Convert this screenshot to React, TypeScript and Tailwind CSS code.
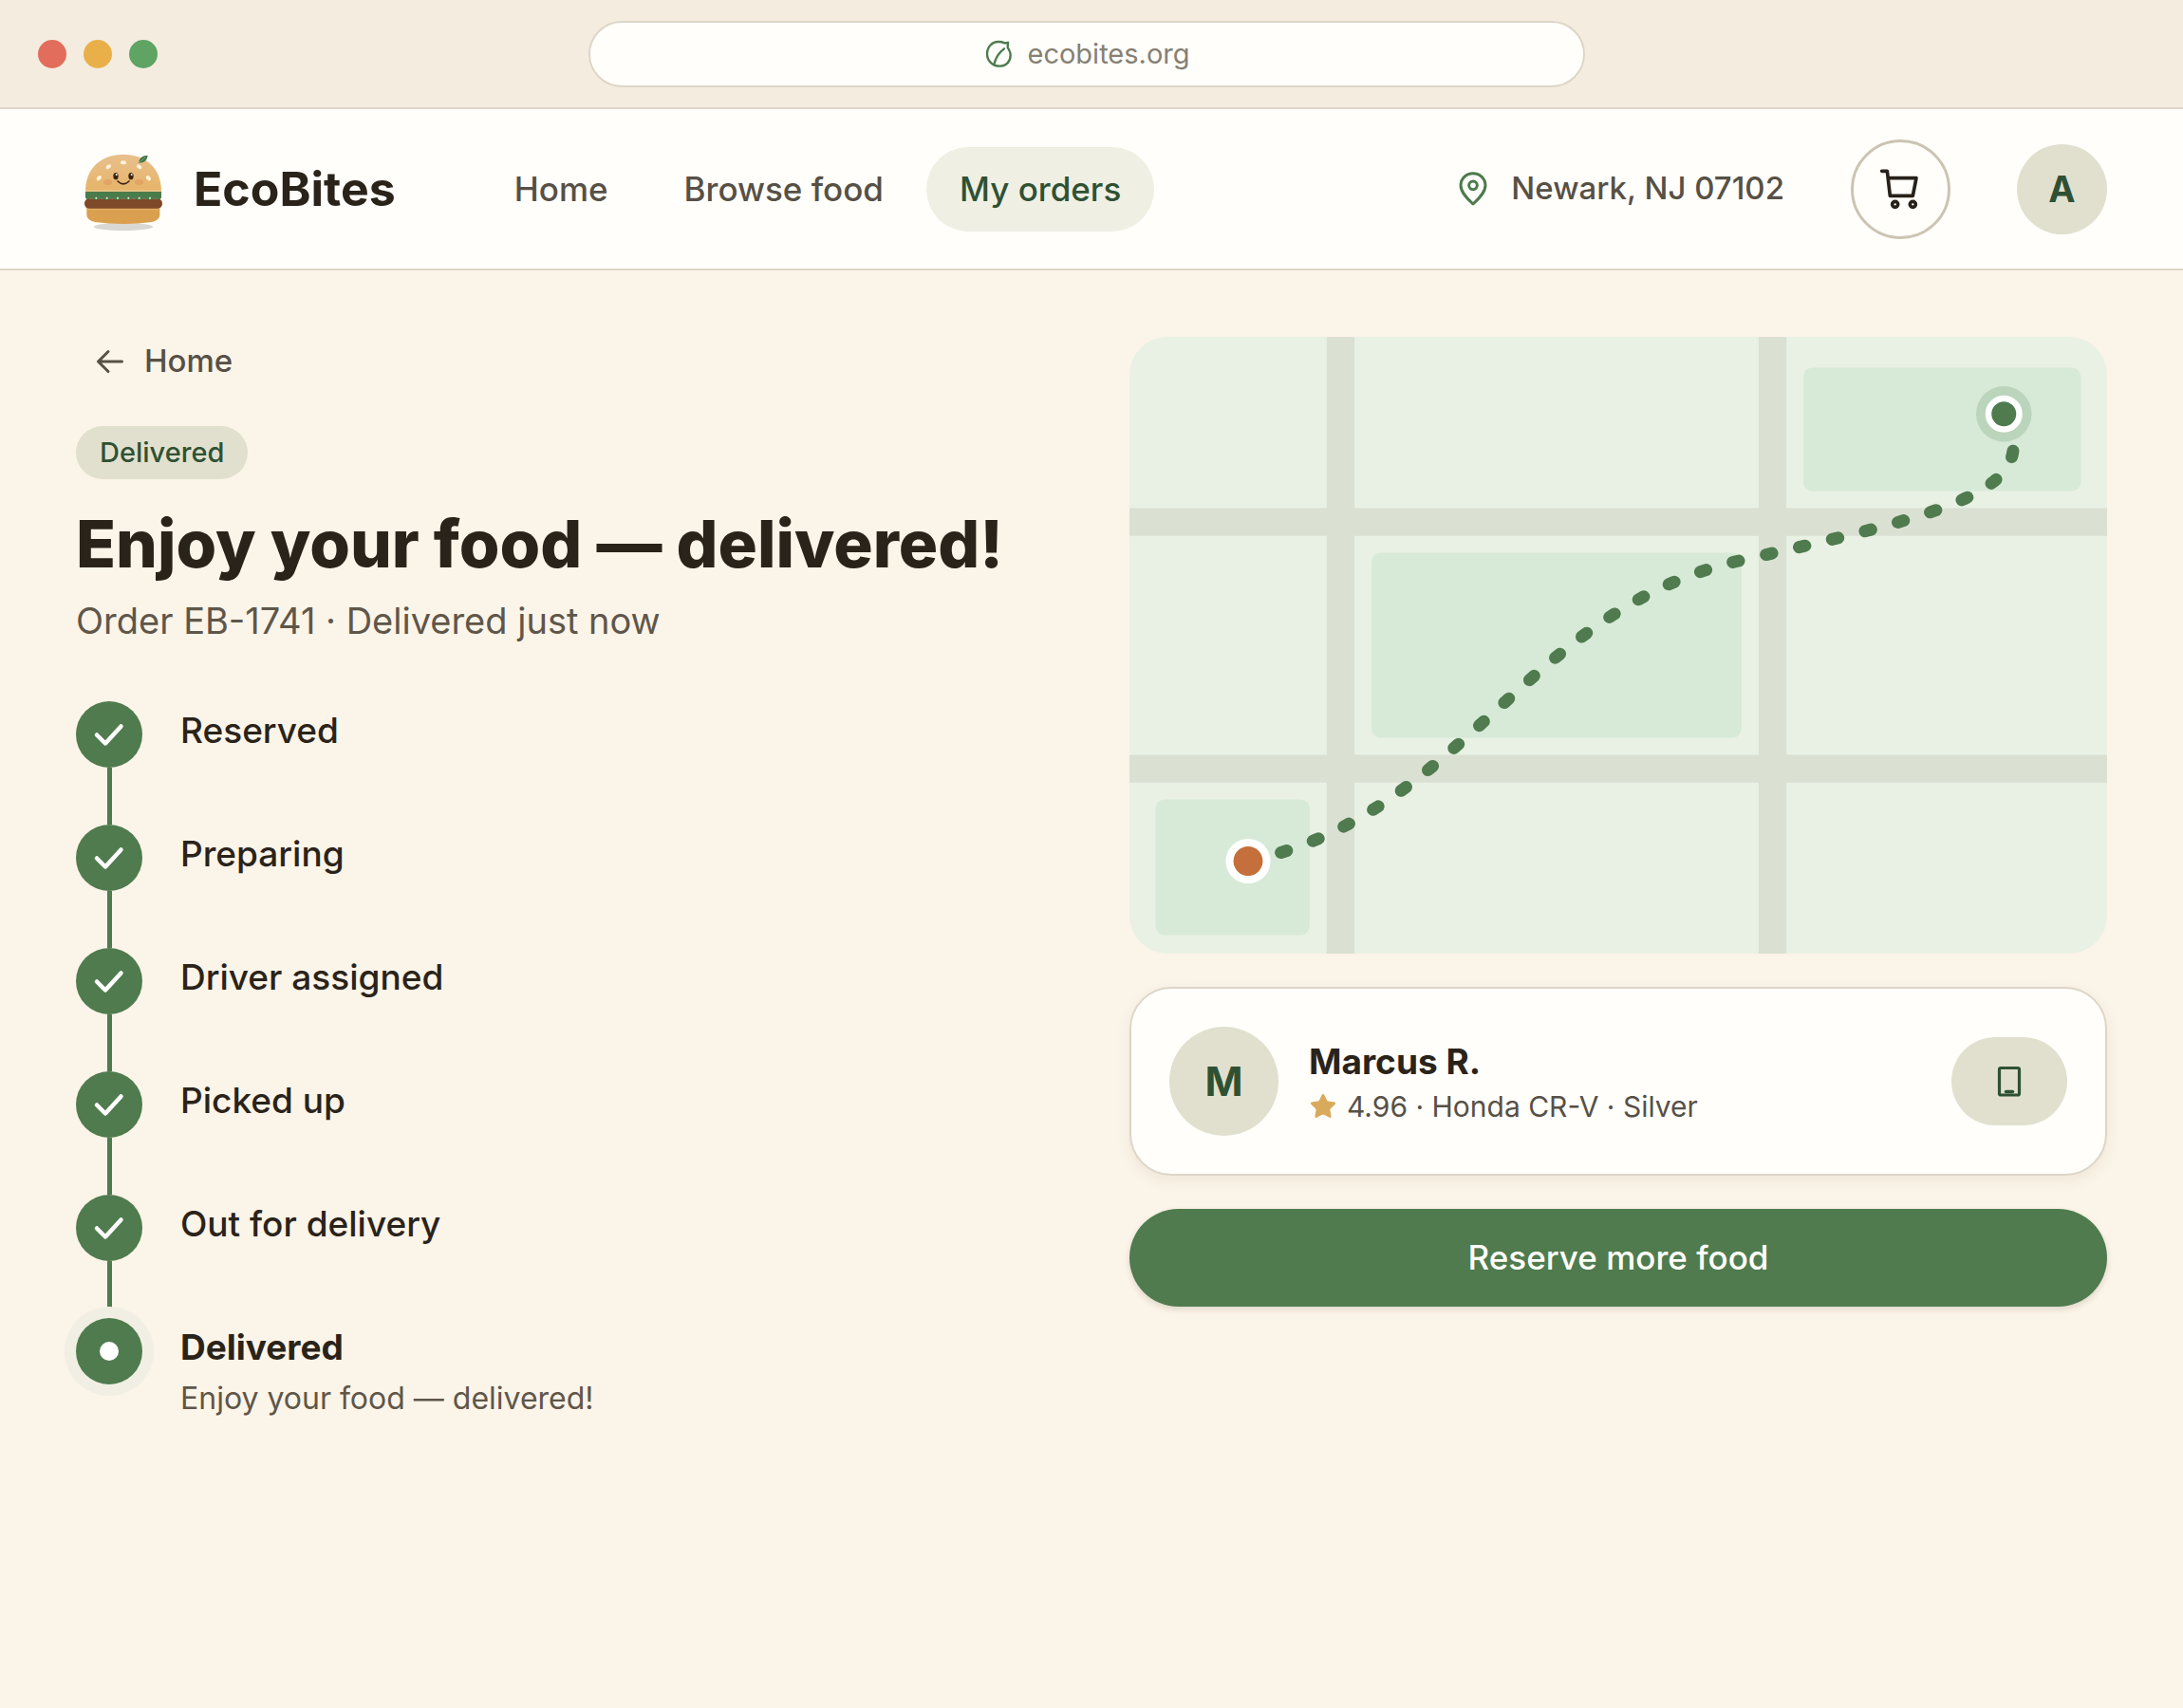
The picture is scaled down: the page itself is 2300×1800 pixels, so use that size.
import clsx from "clsx";
import { Star } from "lucide-react";
import React from "react";

const navLinks = [
  { label: "Home", active: false },
  { label: "Browse food", active: false },
  { label: "My orders", active: true },
];

const steps = [
  { label: "Reserved" },
  { label: "Preparing" },
  { label: "Driver assigned" },
  { label: "Picked up" },
  { label: "Out for delivery" },
  { label: "Delivered", note: "Enjoy your food — delivered!" },
];

const BurgerLogo = () => (
  <svg viewBox="30 30 300 300" className="size-[100px] flex-none" aria-hidden="true">
    <defs>
      <linearGradient id="bun-top" x1="0" y1="0" x2="0" y2="1">
        <stop offset="0" stopColor="#e9c08c" />
        <stop offset="1" stopColor="#e6b468" />
      </linearGradient>
    </defs>
    <ellipse cx="180" cy="300" rx="94" ry="12" fill="#dad8d4" />
    <path
      d="M64 238H295V262Q295 279 270 285Q225 291 180 291Q135 291 90 285Q64 279 64 262Z"
      fill="#daa04f"
    />
    <path d="M64 238H295V247H64Z" fill="#e3ab62" />
    <rect x="57" y="211" width="246" height="31" rx="15" fill="#7e4929" />
    <path
      d="M60 186H300V206Q300 213 290 213Q281 209 272 213Q264 218 256 213Q247 209 238 213Q230 218 222 213Q213 209 204 213Q196 218 188 213Q179 209 170 213Q162 218 154 213Q145 209 136 213Q128 218 120 213Q111 209 102 213Q94 218 86 213Q77 209 70 213Q60 213 60 206Z"
      fill="#4a7b4a"
    />
    <g fill="#f3f1e0">
      {[94, 128, 162, 196, 230, 264].map((x) => (
        <circle key={x} cx={x} cy="209" r="3" />
      ))}
    </g>
    <path d="M60 189C60 112 112 71 180 71C248 71 300 112 300 189Z" fill="url(#bun-top)" />
    <path d="M60 183H300V189H60Z" fill="#e8c184" />
    <g fill="#fff3d9">
      <ellipse cx="180" cy="97" rx="9" ry="6" />
      <ellipse cx="133" cy="110" rx="9" ry="6" transform="rotate(-35 133 110)" />
      <ellipse cx="230" cy="110" rx="9" ry="6" transform="rotate(35 230 110)" />
      <ellipse cx="103" cy="146" rx="9" ry="6" transform="rotate(-48 103 146)" />
      <ellipse cx="259" cy="146" rx="9" ry="6" transform="rotate(48 259 146)" />
    </g>
    <path d="M229 98C229 83 240 74 257 74C256 89 245 98 229 98Z" fill="#3f7648" />
    <path d="M230 97L251 79" stroke="#9cc09a" strokeWidth="2" />
    <ellipse cx="131" cy="159" rx="14" ry="9" fill="#dd9a5c" opacity="0.65" />
    <ellipse cx="230" cy="159" rx="14" ry="9" fill="#dd9a5c" opacity="0.65" />
    <ellipse cx="156" cy="140" rx="8" ry="11" fill="#3a2512" />
    <ellipse cx="204" cy="140" rx="8" ry="11" fill="#3a2512" />
    <circle cx="158" cy="135" r="3" fill="#fff" />
    <circle cx="206" cy="135" r="3" fill="#fff" />
    <path
      d="M162 156Q180 173 198 156"
      fill="none"
      stroke="#3a2512"
      strokeWidth="5"
      strokeLinecap="round"
    />
  </svg>
);

const LeafIcon = () => (
  <svg
    viewBox="52 66 90 90"
    className="size-[30px] flex-none"
    fill="none"
    stroke="#4c7a4c"
    strokeWidth="7"
    aria-hidden="true"
  >
    <path d="M130 75L119 76C113 73 107 72 100 72C79 72 64 89 64 110C64 133 82 149 104 149C125 149 138 134 138 114C138 105 134 98 129 90Z" />
    <path d="M86 144C91 120 103 105 118 94" strokeLinecap="round" />
  </svg>
);

const PinIcon = () => (
  <svg
    viewBox="43 124 108 108"
    className="size-9 flex-none"
    fill="none"
    stroke="#4c7a4c"
    strokeWidth="9"
    strokeLinejoin="round"
    aria-hidden="true"
  >
    <path d="M97 226C82 212 58 191 58 167A39 38 0 0 1 136 167C136 191 112 212 97 226Z" />
    <circle cx="97" cy="167" r="13" />
  </svg>
);

const CartIcon = () => (
  <svg
    viewBox="150 111 135 135"
    className="size-[45px]"
    fill="none"
    stroke="#272119"
    strokeWidth="11"
    strokeLinecap="round"
    strokeLinejoin="round"
    aria-hidden="true"
  >
    <path d="M158 121H175L184 199H256L267 143H178" />
    <circle cx="200" cy="226" r="9" />
    <circle cx="256" cy="226" r="9" />
  </svg>
);

const RouteMap = () => (
  <div className="h-[650px] overflow-hidden rounded-[40px] bg-[#e9f1e4]">
    <svg
      viewBox="0 0 320 200"
      preserveAspectRatio="xMidYMid slice"
      className="block h-full w-full"
      role="img"
      aria-label="Delivery route"
    >
      <g fill="#d6ead7">
        <rect x="10" y="150" width="50" height="44" rx="3" />
        <rect x="80" y="70" width="120" height="60" rx="3" />
        <rect x="220" y="10" width="90" height="40" rx="3" />
      </g>
      <path
        d="M0 60H320M0 140H320M70 0V200M210 0V200"
        stroke="#dae0d2"
        strokeWidth="9"
        fill="none"
      />
      <path
        d="M40 170C110 155 130 88 200 72.4C270 56.8 298 49 285 25"
        stroke="#4f7b4e"
        strokeWidth="4"
        strokeLinecap="round"
        strokeDasharray="2 9"
        fill="none"
      />
      <circle cx="40" cy="170" r="6" fill="#c46f3c" stroke="#fff" strokeWidth="2.5" />
      <circle cx="285" cy="25" r="9" fill="#4f7b4e" opacity="0.2" />
      <circle cx="285" cy="25" r="5" fill="#4f7b4e" stroke="#fff" strokeWidth="2" />
    </svg>
  </div>
);

const BrowserBar = () => (
  <div className="flex h-[115px] items-center border-b-2 border-[#ddd6c8] bg-[#f4ecdf] px-10">
    <div className="flex gap-[18px]">
      <span className="size-[30px] rounded-full bg-[#e26d5c]" />
      <span className="size-[30px] rounded-full bg-[#e9b04a]" />
      <span className="size-[30px] rounded-full bg-[#5fa463]" />
    </div>
    <div className="flex flex-1 justify-center">
      <label className="flex h-[70px] w-full max-w-[1050px] items-center justify-center gap-4 rounded-full border-2 border-[#ddd6c8] bg-[#fffefa]">
        <LeafIcon />
        <input
          type="text"
          aria-label="Address"
          defaultValue="ecobites.org"
          className="field-sizing-content text-[29px] text-[#858075] outline-none"
        />
      </label>
    </div>
    <div className="w-[136px]" />
  </div>
);

const Header = () => (
  <header className="flex h-[170px] items-center border-b-2 border-[#ddd6c8] bg-[#fffefa] px-20">
    <a href="#" className="flex items-center gap-6 text-[50px] leading-none font-bold">
      <BurgerLogo />
      EcoBites
    </a>
    <nav className="ml-[90px] flex gap-2.5">
      {navLinks.map(({ label, active }) => (
        <a
          key={label}
          href="#"
          className={clsx(
            "flex h-[89px] items-center rounded-full px-[35px] text-[35px] font-medium whitespace-nowrap",
            active ? "bg-[#f0efe3] text-[#2f5133]" : "text-[#575046]"
          )}
        >
          {label}
        </a>
      ))}
    </nav>
    <div className="ml-auto flex items-center gap-[70px]">
      <div className="flex items-center gap-[22px] text-[33px] font-medium whitespace-nowrap text-[#575046]">
        <PinIcon />
        Newark, NJ 07102
      </div>
      <button
        type="button"
        aria-label="Cart"
        className="flex size-[105px] items-center justify-center rounded-full border-3 border-[#cbc4b3]"
      >
        <CartIcon />
      </button>
      <button
        type="button"
        aria-label="Account"
        className="size-[95px] rounded-full bg-[#e1e0cf] text-[38px] font-bold text-[#2f5133]"
      >
        A
      </button>
    </div>
  </header>
);

const OrderSteps = () => (
  <ol className="mt-15">
    {steps.map(({ label, note }) => (
      <li key={label} className="flex gap-10">
        <div className="flex flex-none flex-col items-center">
          {note ? (
            <span className="flex size-[70px] items-center justify-center rounded-full bg-[#4f7b4e] shadow-[0_0_0_12px_#f1efe3]">
              <span className="size-5 rounded-full bg-white" />
            </span>
          ) : (
            <>
              <span className="flex size-[70px] items-center justify-center rounded-full bg-[#4f7b4e]">
                <svg viewBox="0 0 40 40" className="size-10" aria-hidden="true">
                  <path
                    d="M7 20.500L16 29.500L32.500 11.500"
                    fill="none"
                    stroke="#fff"
                    strokeWidth="4.500"
                    strokeLinecap="round"
                    strokeLinejoin="round"
                  />
                </svg>
              </span>
              <span className="h-15 w-[5px] bg-[#4f7b4e]" />
            </>
          )}
        </div>
        <div className="pt-1.5">
          <div className={clsx("text-[37px] leading-[50px]", note ? "font-bold" : "font-medium")}>
            {label}
          </div>
          {note && <p className="mt-1.5 text-[32px] leading-[46px] text-[#5f564a]">{note}</p>}
        </div>
      </li>
    ))}
  </ol>
);

const DriverCard = () => (
  <div className="flex items-center gap-8 rounded-[44px] border-2 border-[#ddd6c8] bg-[#fffefa] p-10 shadow-[0_5px_16px_rgba(60,50,20,0.07)]">
    <div className="flex size-[115px] flex-none items-center justify-center rounded-full bg-[#e1e0cf] text-[43px] font-bold text-[#2f5133]">
      M
    </div>
    <div className="flex-1">
      <div className="text-[37px] leading-[53px] font-bold">Marcus R.</div>
      <div className="flex items-center gap-2.5 text-[30px] leading-[43px] text-[#575046]">
        <Star className="size-[30px] fill-[#d9aa5c] stroke-[#d9aa5c] stroke-1" />
        4.96 · Honda CR-V · Silver
      </div>
    </div>
    <button
      type="button"
      aria-label="Call driver"
      className="flex h-[93px] w-[122px] items-center justify-center rounded-full bg-[#e1e0cf]"
    >
      <svg viewBox="0 0 36 36" className="size-9" aria-hidden="true">
        <rect
          x="7.500"
          y="3.500"
          width="21"
          height="28.500"
          rx="1.500"
          fill="none"
          stroke="#2f5133"
          strokeWidth="3.200"
        />
        <path d="M14.500 28.500H21.500" stroke="#2f5133" strokeWidth="3.500" strokeLinecap="round" />
      </svg>
    </button>
  </div>
);

export default function App() {
  return (
    <div className="min-h-screen bg-[#fbf4e8] font-['Inter','Liberation_Sans',sans-serif] text-[#2a231a]">
      <BrowserBar />
      <Header />
      <main className="grid grid-cols-2 items-start gap-20 px-20 py-[70px]">
        <section>
          <a
            href="#"
            className="flex h-[52px] w-fit items-center gap-5 px-5 text-[33px] font-medium text-[#575046]"
          >
            <svg viewBox="0 0 32 32" className="size-8" aria-hidden="true">
              <path
                d="M28.500 16H3.500M14 5.500L3.500 16L14 26.500"
                fill="none"
                stroke="currentColor"
                strokeWidth="3"
                strokeLinecap="round"
                strokeLinejoin="round"
              />
            </svg>
            Home
          </a>
          <span className="mt-[42px] flex h-14 w-fit items-center rounded-full bg-[#e1e0cf] px-[25px] text-[29px] font-medium text-[#2f5133]">
            Delivered
          </span>
          <h1 className="mt-[30px] text-[69px] leading-[76px] font-extrabold">
            Enjoy your food — delivered!
          </h1>
          <p className="mt-[18px] text-[38px] leading-[50px] text-[#5f564a]">
            Order EB-1741 · Delivered just now
          </p>
          <OrderSteps />
        </section>
        <section className="flex flex-col gap-[35px]">
          <RouteMap />
          <DriverCard />
          <button
            type="button"
            className="h-[103px] rounded-full bg-[#4f7b4e] text-[35px] font-medium text-[#fffefa] shadow-[0_3px_6px_rgba(60,50,20,0.15)]"
          >
            Reserve more food
          </button>
        </section>
      </main>
    </div>
  );
}
